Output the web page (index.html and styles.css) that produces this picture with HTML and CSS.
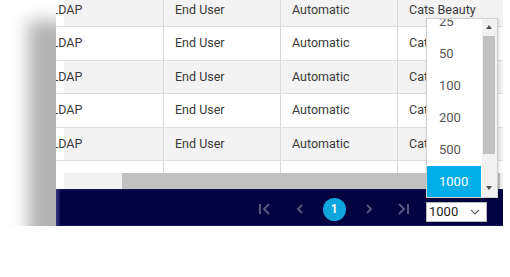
FILE: index.html
```html
<!DOCTYPE html>
<html lang="en">
<head>
  <meta charset="UTF-8">
  <title>Users grid</title>
  <link rel="stylesheet" href="styles.css">
</head>
<body>

  <div class="panel">
    <div class="grid">
      <div class="row alt"><div class="cell first">LDAP</div><div class="cell">End User</div><div class="cell">Automatic</div><div class="cell">Cats Beauty</div></div>
      <div class="row"><div class="cell first">LDAP</div><div class="cell">End User</div><div class="cell">Automatic</div><div class="cell">Cats Beauty</div></div>
      <div class="row alt"><div class="cell first">LDAP</div><div class="cell">End User</div><div class="cell">Automatic</div><div class="cell">Cats Beauty</div></div>
      <div class="row"><div class="cell first">LDAP</div><div class="cell">End User</div><div class="cell">Automatic</div><div class="cell">Cats Beauty</div></div>
      <div class="row alt"><div class="cell first">LDAP</div><div class="cell">End User</div><div class="cell">Automatic</div><div class="cell">Cats Beauty</div></div>
      <div class="row"><div class="cell first"></div><div class="cell"></div><div class="cell"></div><div class="cell"></div></div>
    </div>

    <div class="hscroll"><div class="hthumb"></div></div>

    <div class="footer">
      <div class="pager">
        <span class="pg">
          <svg width="14" height="14" viewBox="0 0 14 14"><path d="M2 2v10M11 2L6 7l5 5" fill="none" stroke="#56567e" stroke-width="2"/></svg>
        </span>
        <span class="pg">
          <svg width="14" height="14" viewBox="0 0 14 14"><path d="M9 3L5 7l4 4" fill="none" stroke="#56567e" stroke-width="2"/></svg>
        </span>
        <span class="pg"><span class="current">1</span></span>
        <span class="pg">
          <svg width="14" height="14" viewBox="0 0 14 14"><path d="M5 3l4 4-4 4" fill="none" stroke="#56567e" stroke-width="2"/></svg>
        </span>
        <span class="pg">
          <svg width="14" height="14" viewBox="0 0 14 14"><path d="M3 2l5 5-5 5M12 2v10" fill="none" stroke="#56567e" stroke-width="2"/></svg>
        </span>
      </div>
      <div class="select">
        <span>1000</span>
        <svg width="10" height="6" viewBox="0 0 10 6"><path d="M1 1l4 4 4-4" fill="none" stroke="#666" stroke-width="1.2"/></svg>
      </div>
    </div>

    <!-- open page-size list -->
    <div class="dropdown">
      <ul class="options">
        <li>25</li>
        <li>50</li>
        <li>100</li>
        <li>200</li>
        <li>500</li>
        <li class="selected">1000</li>
      </ul>
      <div class="vscroll">
        <span class="arrow up"></span>
        <div class="vthumb"></div>
        <span class="arrow down"></span>
      </div>
    </div>
  </div>

</body>
</html>
```

FILE: styles.css
```css
body, div, ul, li {
  margin: 0;
  padding: 0;
}

body {
  background: #fff;
  font-family: Roboto, "Liberation Sans", sans-serif;
  font-size: 12.5px;
  color: #3a3a3a;
  overflow: hidden;
}

.panel {
  position: relative;
  width: 447px;
  margin: -6.5px 0 0 56px;
  background: #fff;
  box-shadow: -28px 27px 16px rgba(0, 0, 0, 0.3);
}

.grid {
  height: 179.5px;
  overflow: hidden;
}

.row {
  display: flex;
  height: 32.5px;
  border-bottom: 1px solid #dedede;
  background: #fff;
}

.row.alt {
  background: #f3f3f3;
}

.cell {
  flex: 0 0 117px;
  box-sizing: border-box;
  padding-left: 11px;
  border-right: 1px solid #d9d9d9;
  line-height: 32.5px;
  white-space: nowrap;
  overflow: hidden;
}

.cell.first {
  flex-basis: 108px;
  padding-left: 0;
  text-indent: -4.5px;
  background: linear-gradient(to right, #fff 8px, transparent 8px);
}

.hscroll {
  height: 16px;
  margin-left: 8px;
  background: #f1f1f1;
  display: flex;
}

.hthumb {
  margin-left: 58px;
  width: 378px;
  background: #c1c1c1;
}

.footer {
  height: 37px;
  background: #020240;
  display: flex;
  align-items: center;
  justify-content: flex-end;
  padding-right: 16px;
  box-shadow: inset 3px 0 3px rgba(110, 110, 190, 0.45);
}

.pager {
  display: flex;
  align-items: center;
  margin-top: 3px;
}

.pg {
  width: 34.5px;
  display: flex;
  justify-content: center;
  align-items: center;
}

.current {
  width: 23px;
  height: 23px;
  border-radius: 50%;
  background: #0fa6de;
  color: #fff;
  font-weight: bold;
  font-size: 12px;
  line-height: 23px;
  text-align: center;
}

.select {
  width: 61px;
  height: 20px;
  margin: 8px 0 0 5.5px;
  box-sizing: border-box;
  background: #fff;
  border: 1px solid #b8b8b8;
  display: flex;
  align-items: center;
  justify-content: space-between;
  padding: 0 6px 0 2px;
  font-size: 13px;
  color: #222;
}

.dropdown {
  position: absolute;
  top: 24.5px;
  left: 370px;
  width: 72px;
  height: 180px;
  background: #fff;
  border: 1px solid #d0d0d0;
  box-sizing: border-box;
  overflow: hidden;
  display: flex;
  box-shadow: 1px 1px 3px rgba(0, 0, 0, 0.15);
}

.options {
  list-style: none;
  width: 55px;
  margin-top: -13px;
}

.options li {
  height: 32px;
  line-height: 32px;
  padding-left: 12px;
  font-size: 13px;
  color: #555;
}

.options li.selected {
  background: #03aee8;
  color: #fff;
}

.vscroll {
  position: relative;
  width: 15px;
  margin-left: 1px;
  background: #f1f1f1;
}

.vthumb {
  position: absolute;
  top: 17px;
  left: 1px;
  width: 12px;
  height: 118px;
  background: #c1c1c1;
}

.arrow {
  position: absolute;
  left: 4px;
  width: 0;
  height: 0;
  border-left: 3.5px solid transparent;
  border-right: 3.5px solid transparent;
}

.arrow.up {
  top: 6px;
  border-bottom: 4px solid #505050;
}

.arrow.down {
  bottom: 7px;
  border-top: 4px solid #505050;
}
```
